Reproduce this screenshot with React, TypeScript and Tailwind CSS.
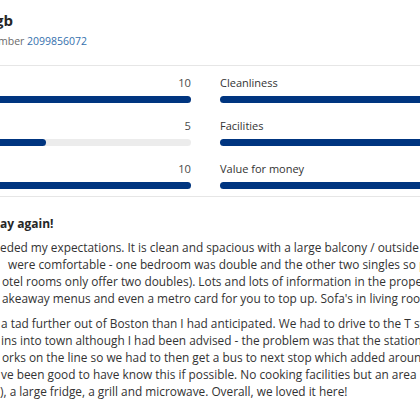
const scores = [
  { left: "Staff", leftScore: 10, right: "Cleanliness", rightScore: 10 },
  { left: "Comfort", leftScore: 5, right: "Facilities", rightScore: 10 },
  { left: "Location", leftScore: 10, right: "Value for money", rightScore: 10 },
];

const Bar = ({ value, className }: { value: number; className: string }) => (
  <div className={`h-[7px] w-full rounded-full bg-[#ececec] ${className}`}>
    <div className="h-full rounded-full bg-[#003580]" style={{ width: `${value * 10}%` }} />
  </div>
);

export default function App() {
  return (
    <div className="w-[420px] h-[411px] overflow-hidden bg-white text-[#333] font-['Open_Sans',sans-serif]">
      {/* Reviewer */}
      <div className="pt-[9px]">
        <p className="-ml-[5px] text-[15px] font-bold leading-[22px] text-[#262626]">gb</p>
        <p className="-ml-[2px] text-[10.5px] leading-[20px] text-[#6b6b6b]">
          mber <span className="text-[#3570ad]">2099856072</span>
        </p>
      </div>

      {/* Scores */}
      <div className="mt-[14px] border-y border-[#e6e6e6] pt-[8px] pb-[7px]">
        <div className="-ml-[100px] grid w-[611px] grid-cols-2 gap-x-[29px] gap-y-[14px]">
          {scores.map((s) => (
            <div key={s.left} className="contents">
              <div>
                <div className="flex justify-between text-[11.2px] leading-[18px] text-[#4a4a4a]">
                  <span>{s.left}</span>
                  <span>{s.leftScore}</span>
                </div>
                <Bar value={s.leftScore} className="mt-[4px]" />
              </div>
              <div>
                <div className="flex justify-between text-[11px] leading-[18px] text-[#333]">
                  <span>{s.right}</span>
                  <span>{s.rightScore}</span>
                </div>
                <Bar value={s.rightScore} className="mt-[4px]" />
              </div>
            </div>
          ))}
        </div>
      </div>

      {/* Review */}
      <div className="mt-[18px] whitespace-nowrap text-[11.85px] leading-[17px] text-[#333]">
        <p className="text-[12px] font-bold text-[#262626]">ay again!</p>
        <div className="mt-[7px]">
          <p>eded my expectations. It is clean and spacious with a large balcony / outside</p>
          <p className="pl-[8px]">were comfortable - one bedroom was double and the other two singles so perfect</p>
          <p className="pl-[2px]">otel rooms only offer two doubles). Lots and lots of information in the property</p>
          <p className="pl-[2px]">akeaway menus and even a metro card for you to top up. Sofa's in living room</p>
        </div>
        <div className="mt-[8px]">
          <p className="pl-[1px]">a tad further out of Boston than I had anticipated. We had to drive to the T station</p>
          <p className="pl-[1px]">ins into town although I had been advised - the problem was that the station</p>
          <p className="pl-[2px]">orks on the line so we had to then get a bus to next stop which added around</p>
          <p className="pl-[1px]">ve been good to have know this if possible. No cooking facilities but an area</p>
          <p>), a large fridge, a grill and microwave. Overall, we loved it here!</p>
        </div>
      </div>
    </div>
  );
}
